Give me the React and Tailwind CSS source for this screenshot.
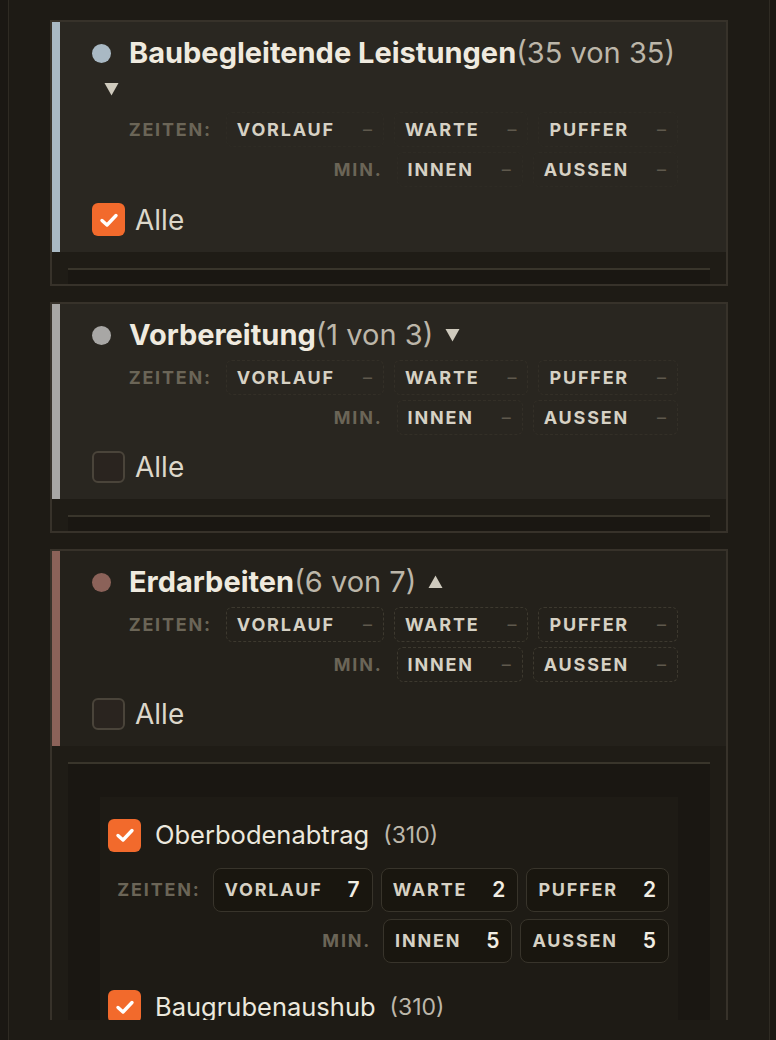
import { Fragment } from "react";

const FONT = { fontFamily: "Inter, 'Noto Sans', sans-serif" };

const SECTIONS = [
  {
    name: "Baubegleitende Leistungen",
    count: "(35 von 35)",
    dot: "bg-[#a9b9c4]",
    bar: "border-l-[#a9b9c4]",
    headerBg: "bg-[#2a2721]",
    chipBorder: "border-[#2e2b24]",
    open: false,
    all: true,
  },
  {
    name: "Vorbereitung",
    count: "(1 von 3)",
    dot: "bg-[#a8a7a5]",
    bar: "border-l-[#a8a7a5]",
    headerBg: "bg-[#292620]",
    chipBorder: "border-[#332f27]",
    open: false,
    all: false,
  },
  {
    name: "Erdarbeiten",
    count: "(6 von 7)",
    dot: "bg-[#8b6259]",
    bar: "border-l-[#8b6259]",
    headerBg: "bg-[#24211b]",
    chipBorder: "border-[#3d392f]",
    open: true,
    all: false,
  },
];

const ITEMS = [
  { name: "Oberbodenabtrag", code: "(310)", vorlauf: 7, warte: 2, puffer: 2, innen: 5, aussen: 5 },
  { name: "Baugrubenaushub", code: "(310)", vorlauf: 7, warte: 2, puffer: 2, innen: 5, aussen: 5 },
];

function Check({ checked }) {
  if (checked) {
    return (
      <span className="flex h-[33px] w-[33px] shrink-0 items-center justify-center rounded-md bg-[#f26a2c]">
        <svg width="20" height="16" viewBox="0 0 20 16" fill="none">
          <polyline points="3,8.5 8,13 17,3.5" stroke="#fff" strokeWidth="3.4" strokeLinecap="round" strokeLinejoin="round" />
        </svg>
      </span>
    );
  }
  return <span className="h-[32px] w-[33px] shrink-0 rounded-md border-2 border-[#4a443a] bg-[#2a241f]" />;
}

function Toggle({ open }) {
  return (
    <button className="ml-2 flex h-[34px] items-center px-1">
      <svg width="15" height="14" viewBox="0 0 15 14">
        {open ? (
          <polygon points="7.5,0.5 14.5,13 0.5,13" fill="#cfcabd" />
        ) : (
          <polygon points="0.5,1 14.5,1 7.5,13.5" fill="#cfcabd" />
        )}
      </svg>
    </button>
  );
}

// Zeitfelder im Kopf einer Gruppe (leer, gestrichelt)
function HeadChip({ label, border }) {
  return (
    <div className={`flex h-[35px] items-center gap-[28px] rounded-md border border-dashed ${border} pl-[10px] pr-[11px]`}>
      <span className="text-[18px] font-bold uppercase tracking-[0.1em] text-[#d6d1c4]">{label}</span>
      <span className="text-[18px] text-[#5f594d]">–</span>
    </div>
  );
}

// Zeitfelder einer einzelnen Leistung
function ItemChip({ label, value }) {
  return (
    <div className="flex h-[44px] items-center gap-[25px] rounded-lg border-[1.5px] border-[#38342b] bg-[#19160f] pl-[11px] pr-[12px]">
      <span className="text-[18px] font-bold uppercase tracking-[0.1em] text-[#d6d1c4]">{label}</span>
      <span className="text-[21px] font-semibold text-[#f1ede3]">{value}</span>
    </div>
  );
}

function RowLabel({ children }) {
  return (
    <span className="mr-[4px] text-[18px] font-bold uppercase tracking-[0.1em] text-[#6b6557]">{children}</span>
  );
}

function Section({ s }) {
  return (
    <div className="border-2 border-[#37322a]">
      <div className={`border-l-8 ${s.bar} ${s.headerBg} pb-4 pl-8 pr-12 pt-3`}>
        <div className="flex flex-wrap items-center">
          <span className={`mr-[18px] h-[19px] w-[19px] shrink-0 rounded-full ${s.dot}`} />
          <span className="whitespace-nowrap text-[29px] leading-[38px]">
            <span className="font-bold text-[#efeadf]">{s.name}</span>
            <span className="text-[#bcb6a9]">{s.count}</span>
          </span>
          <Toggle open={s.open} />
        </div>

        <div className="mt-[6px] flex flex-col items-end gap-[5px]">
          <div className="flex items-center gap-[10px]">
            <RowLabel>Zeiten:</RowLabel>
            <HeadChip label="Vorlauf" border={s.chipBorder} />
            <HeadChip label="Warte" border={s.chipBorder} />
            <HeadChip label="Puffer" border={s.chipBorder} />
          </div>
          <div className="flex items-center gap-[10px]">
            <RowLabel>Min.</RowLabel>
            <HeadChip label="Innen" border={s.chipBorder} />
            <HeadChip label="Aussen" border={s.chipBorder} />
          </div>
        </div>

        <label className="mt-4 flex items-center gap-[10px]">
          <Check checked={s.all} />
          <span className="text-[28px] leading-8 text-[#dcd7ca]">Alle</span>
        </label>
      </div>

      <div className="bg-[#1f1c16] px-4 pt-4">
        {s.open ? (
          <div className="border-t-2 border-[#39352b] bg-[#1a1712] px-8 pt-[33px]">
            <div className="flex flex-col gap-2 bg-[#1e1b15] pb-4 pl-2 pr-[9px] pt-[21px]">
              {ITEMS.map((it) => (
                <div key={it.name} className="pb-[19px]">
                  <label className="flex items-center gap-[14px]">
                    <Check checked />
                    <span className="text-[25.5px] leading-8 text-[#ece8dd]">{it.name}</span>
                    <span className="text-[23px] text-[#bdb7aa]">{it.code}</span>
                  </label>
                  <div className="mt-[15px] flex flex-col items-end gap-[7px]">
                    <div className="flex items-center gap-2">
                      <RowLabel>Zeiten:</RowLabel>
                      <ItemChip label="Vorlauf" value={it.vorlauf} />
                      <ItemChip label="Warte" value={it.warte} />
                      <ItemChip label="Puffer" value={it.puffer} />
                    </div>
                    <div className="flex items-center gap-2">
                      <RowLabel>Min.</RowLabel>
                      <ItemChip label="Innen" value={it.innen} />
                      <ItemChip label="Aussen" value={it.aussen} />
                    </div>
                  </div>
                </div>
              ))}
            </div>
          </div>
        ) : (
          <div className="h-4 border-t-2 border-[#39352b] bg-[#1a1712]" />
        )}
      </div>
    </div>
  );
}

export default function App() {
  return (
    <div className="h-[1040px] overflow-hidden bg-[#1b1813]" style={FONT}>
      <div className="ml-2 h-full w-[762px] border-x border-[#2f2b23] bg-[#1e1b15]">
        <div className="h-[1020px] overflow-hidden px-[41px] pt-5">
          <div className="flex flex-col gap-4">
            {SECTIONS.map((s) => (
              <Fragment key={s.name}>
                <Section s={s} />
              </Fragment>
            ))}
          </div>
        </div>
      </div>
    </div>
  );
}
